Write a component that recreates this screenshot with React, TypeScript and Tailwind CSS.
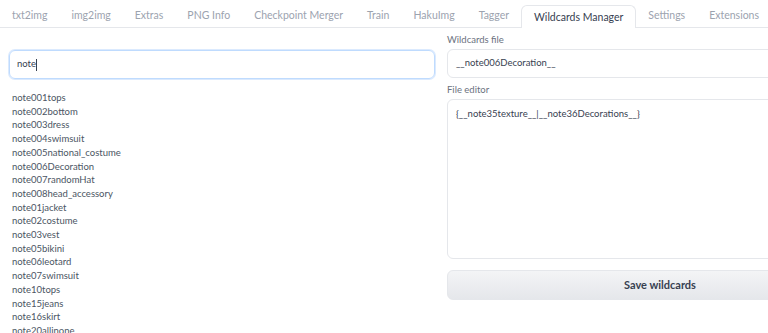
import React from "react";

const tabs = [
  "txt2img",
  "img2img",
  "Extras",
  "PNG Info",
  "Checkpoint Merger",
  "Train",
  "HakuImg",
  "Tagger",
  "Wildcards Manager",
  "Settings",
  "Extensions",
];

const files = [
  "note001tops",
  "note002bottom",
  "note003dress",
  "note004swimsuit",
  "note005national_costume",
  "note006Decoration",
  "note007randomHat",
  "note008head_accessory",
  "note01jacket",
  "note02costume",
  "note03vest",
  "note05bikini",
  "note06leotard",
  "note07swimsuit",
  "note10tops",
  "note15jeans",
  "note16skirt",
  "note20allinone",
];

export default function App() {
  return (
    <div
      className="w-[768px] h-[333px] overflow-hidden bg-white"
      style={{ fontFamily: "Lato, 'Noto Sans', sans-serif" }}
    >
      <div className="w-[900px]">
        {/* Tab bar */}
        <div className="flex items-end h-[28px] border-b border-[#e5e7eb]">
          {tabs.map((t) => {
            const active = t === "Wildcards Manager";
            return (
              <div
                key={t}
                className={
                  active
                    ? "h-[23px] px-[12px] pt-[1px] flex items-center text-[10.5px] text-[#374151] bg-white border border-b-0 border-[#e5e7eb] rounded-t-[6px] -mb-px"
                    : "h-[23px] px-[12px] pt-[1px] flex items-center text-[10.5px] text-[#9ca3af]"
                }
              >
                {t}
              </div>
            );
          })}
        </div>

        <div className="flex gap-[12px] px-[9px]">
          {/* Left column */}
          <div className="w-[426px] pt-[22px]">
            <div className="h-[29px] rounded-[6px] border border-[#bfdbfe] shadow-[0_0_0_1px_#dbeafe] flex items-center px-[7px] text-[9.5px] text-[#374151]">
              <span>note</span>
              <span className="w-px h-[12px] bg-[#374151]" />
            </div>
            <ul className="mt-[12px] pl-[3px] text-[9.5px] leading-[13.7px] text-[#4b5563]">
              {files.map((f) => (
                <li key={f}>{f}</li>
              ))}
            </ul>
          </div>

          {/* Right column */}
          <div className="w-[426px] pt-[5px]">
            <div className="text-[9.5px] text-[#6b7280] leading-[14px] mb-[2px]">
              Wildcards file
            </div>
            <div className="h-[29px] rounded-[6px] border border-[#e5e7eb] flex items-center px-[8px] text-[9.5px] text-[#374151]">
              __note006Decoration__
            </div>
            <div className="text-[9.5px] text-[#6b7280] leading-[14px] mt-[5px] mb-[2px]">
              File editor
            </div>
            <div className="h-[160px] rounded-[6px] border border-[#e5e7eb] px-[8px] pt-[7px] text-[9.5px] text-[#374151]">
              {"{__note35texture__|__note36Decorations__}"}
            </div>
            <button className="mt-[11px] w-full h-[30px] rounded-[6px] border border-[#e5e7eb] bg-gradient-to-b from-[#f3f4f6] to-[#e5e7eb] text-[11px] font-bold text-[#374151]">
              Save wildcards
            </button>
          </div>
        </div>
      </div>
    </div>
  );
}
